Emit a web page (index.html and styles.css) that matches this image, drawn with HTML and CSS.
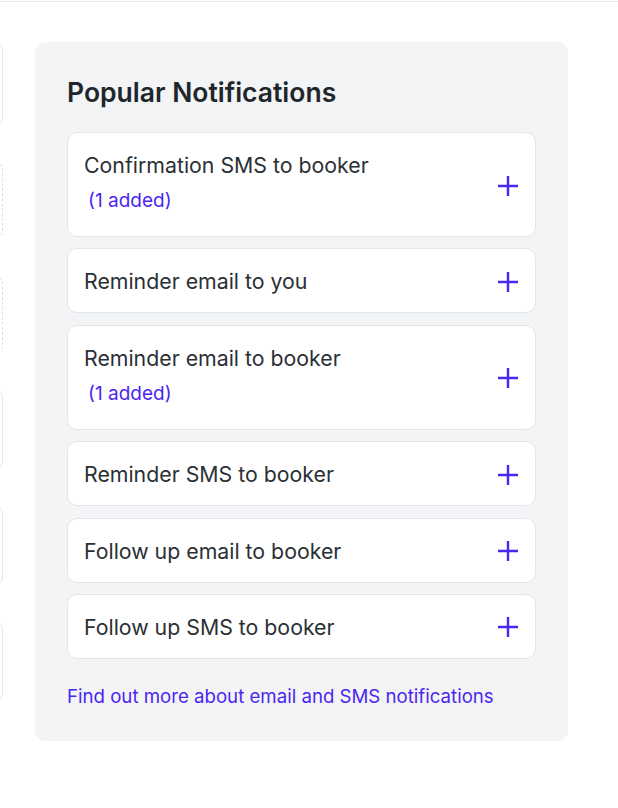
FILE: index.html
```html
<!DOCTYPE html>
<html>
<head>
<meta charset="utf-8">
<link rel="stylesheet" href="styles.css">
</head>
<body>
<div class="topbar"></div>
<div class="layout">
  <div class="side">
    <div class="ghost solid h84"></div>
    <div class="ghost dashed h77"></div>
    <div class="ghost dashed h78"></div>
    <div class="ghost solid h80"></div>
    <div class="ghost solid h80"></div>
    <div class="ghost solid h80"></div>
  </div>
  <aside class="panel">
    <h2 class="panel-title">Popular Notifications</h2>
    <ul class="list">
      <li class="item">
        <div class="item-text">
          <span class="item-name">Confirmation SMS to booker</span>
          <span class="item-added">(1 added)</span>
        </div>
        <svg class="plus" viewBox="0 0 22 22" width="22" height="22"><path d="M11 1v20M1 11h20" stroke="currentColor" stroke-width="2.4" fill="none"/></svg>
      </li>
      <li class="item">
        <div class="item-text"><span class="item-name">Reminder email to you</span></div>
        <svg class="plus" viewBox="0 0 22 22" width="22" height="22"><path d="M11 1v20M1 11h20" stroke="currentColor" stroke-width="2.4" fill="none"/></svg>
      </li>
      <li class="item">
        <div class="item-text">
          <span class="item-name">Reminder email to booker</span>
          <span class="item-added">(1 added)</span>
        </div>
        <svg class="plus" viewBox="0 0 22 22" width="22" height="22"><path d="M11 1v20M1 11h20" stroke="currentColor" stroke-width="2.4" fill="none"/></svg>
      </li>
      <li class="item">
        <div class="item-text"><span class="item-name">Reminder SMS to booker</span></div>
        <svg class="plus" viewBox="0 0 22 22" width="22" height="22"><path d="M11 1v20M1 11h20" stroke="currentColor" stroke-width="2.4" fill="none"/></svg>
      </li>
      <li class="item">
        <div class="item-text"><span class="item-name">Follow up email to booker</span></div>
        <svg class="plus" viewBox="0 0 22 22" width="22" height="22"><path d="M11 1v20M1 11h20" stroke="currentColor" stroke-width="2.4" fill="none"/></svg>
      </li>
      <li class="item">
        <div class="item-text"><span class="item-name">Follow up SMS to booker</span></div>
        <svg class="plus" viewBox="0 0 22 22" width="22" height="22"><path d="M11 1v20M1 11h20" stroke="currentColor" stroke-width="2.4" fill="none"/></svg>
      </li>
    </ul>
    <a class="more" href="#">Find out more about email and SMS notifications</a>
  </aside>
</div>
</body>
</html>
```

FILE: styles.css
```css
* { box-sizing: border-box; }
html, body {
  margin: 0;
  padding: 0;
  background: #ffffff;
  font-family: Inter, "Noto Sans", sans-serif;
  color: #2b3035;
  overflow: hidden;
}
.topbar {
  height: 2px;
  border-bottom: 1px solid #e3e6ea;
}
.layout {
  display: flex;
  align-items: flex-start;
  gap: 32px;
  padding-top: 40px;
}
.side {
  width: 60px;
  margin-left: -57px;
  display: flex;
  flex-direction: column;
  gap: 36px;
  flex: none;
}
.ghost {
  border-radius: 8px;
  background: #fff;
}
.ghost.solid { border: 1px solid #e3e6ea; }
.ghost.dashed { border: 1px dashed #dcdfe4; }
.h84 { height: 84px; }
.h77 { height: 77px; }
.h78 { height: 78px; }
.h80 { height: 80px; }
.panel {
  width: 533px;
  flex: none;
  background: #f3f4f6;
  border-radius: 10px;
  padding: 32px 32px 31px;
}
.panel-title {
  margin: 0 0 22px;
  font-size: 26.5px;
  line-height: 36px;
  font-weight: 600;
  color: #20262c;
}
.list {
  list-style: none;
  margin: 0;
  padding: 0;
  display: flex;
  flex-direction: column;
  gap: 11.4px;
}
.item {
  display: flex;
  align-items: center;
  justify-content: space-between;
  background: #fff;
  border: 1px solid #e2e5e9;
  border-radius: 10px;
  padding: 19px 16px 17px 16px;
}
.item-text {
  display: flex;
  flex-direction: column;
  gap: 8px;
}
.item-name {
  font-size: 21.3px;
  line-height: 27px;
  color: #2b3035;
}
.item-added {
  font-size: 19px;
  line-height: 28px;
  padding-bottom: 4px;
  color: #4b26f0;
  padding-left: 4px;
}
.plus {
  color: #4b26f0;
  flex: none;
}
.more {
  display: block;
  margin-top: 24px;
  font-size: 18.65px;
  line-height: 27px;
  color: #4b26f0;
  text-decoration: none;
}
```
